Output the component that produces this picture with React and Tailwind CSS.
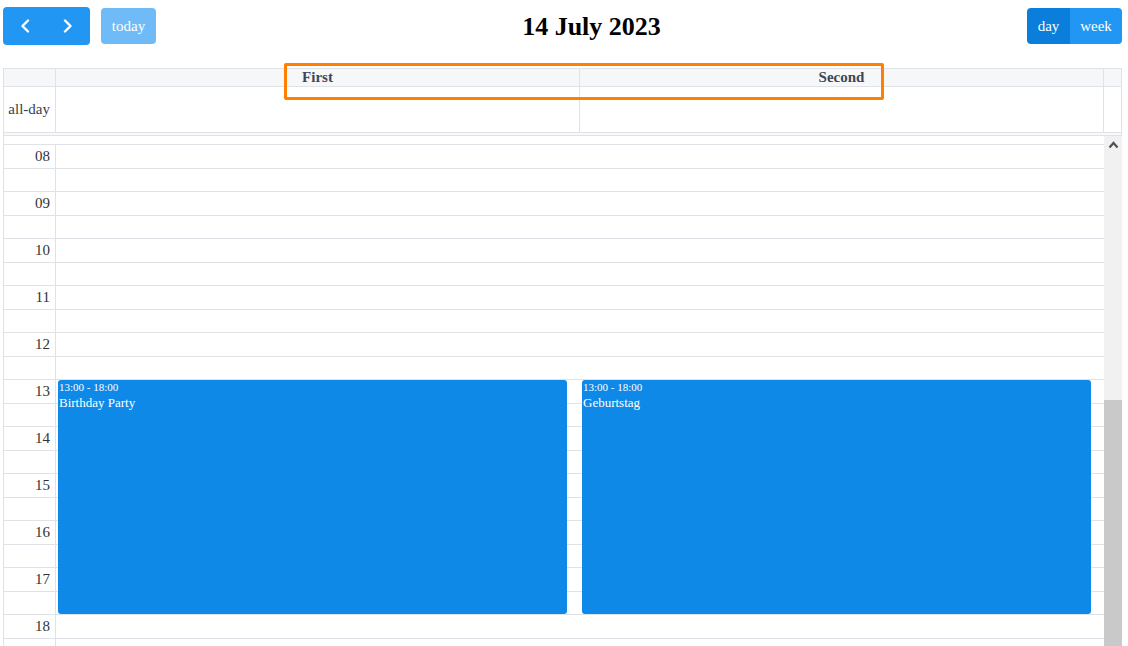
import React from "react"

const SLOTS = [
  "08", "", "09", "", "10", "", "11", "", "12", "", "13", "",
  "14", "", "15", "", "16", "", "17", "", "18", "",
]

const EVENTS = [
  { time: "13:00 - 18:00", title: "Birthday Party" },
  { time: "13:00 - 18:00", title: "Geburtstag" },
]

function Chevron({ dir }) {
  return (
    <svg width="10" height="14" viewBox="0 0 10 14" fill="none">
      <polyline
        points={dir === "left" ? "8,1.5 2.5,7 8,12.5" : "2,1.5 7.5,7 2,12.5"}
        stroke="white"
        strokeWidth="2.4"
        strokeLinecap="round"
        strokeLinejoin="round"
      />
    </svg>
  )
}

function Toolbar() {
  return (
    <div className="flex items-center justify-between h-[38px]">
      <div className="flex items-center">
        <div className="flex w-[87px] h-[38px] rounded-[4px] bg-[#2196f3]">
          <button className="flex-1 flex items-center justify-center pl-[1px]">
            <Chevron dir="left" />
          </button>
          <button className="flex-1 flex items-center justify-center pr-[1px]">
            <Chevron dir="right" />
          </button>
        </div>
        <button className="ml-[11px] w-[55px] h-[36px] rounded-[4px] bg-[#6fbbf7] text-white text-[15px]">
          today
        </button>
      </div>
      <h2 className="mt-[2px] text-[26px] font-bold text-black leading-none">14 July 2023</h2>
      <div className="flex h-[36px] rounded-[4px] overflow-hidden text-white text-[15px]">
        <button className="w-[43px] bg-[#0b7dda]">day</button>
        <button className="w-[52px] bg-[#2196f3]">week</button>
      </div>
    </div>
  )
}

function Scrollbar() {
  return (
    <div className="w-[18px] bg-[#f1f1f1] flex flex-col">
      <div className="h-[17px] flex items-center justify-center">
        <svg width="11" height="8" viewBox="0 0 11 8">
          <polyline
            points="1.5,6.5 5.5,2 9.5,6.5"
            fill="none"
            stroke="#505050"
            strokeWidth="2.2"
            strokeLinejoin="miter"
          />
        </svg>
      </div>
      <div className="h-[247px]" />
      <div className="flex-1 bg-[#c9c9c9]" />
    </div>
  )
}

export default function App() {
  return (
    <div className="relative w-[1128px] h-[646px] overflow-hidden bg-white pt-[7px] font-['Liberation_Serif',serif]">
      <div className="ml-[3px] w-[1119px]">
        <Toolbar />

        <div className="mt-[23px] border-l border-t border-[#dfe2e7]">
          {/* column headers */}
          <div className="flex h-[18px] border-b border-[#dfe2e7] bg-[#f6f7f9] text-[15px] font-bold text-[#3d4757] leading-[17px]">
            <div className="w-[52px] border-r border-[#dfe2e7]" />
            <div className="flex-1 border-r border-[#dfe2e7] text-center">First</div>
            <div className="flex-1 border-r border-[#dfe2e7] text-center">Second</div>
            <div className="w-[18px] border-r border-[#dfe2e7]" />
          </div>

          {/* all-day row */}
          <div className="flex h-[46px] border-b border-[#dfe2e7]">
            <div className="w-[52px] border-r border-[#dfe2e7] flex items-center justify-end pr-[5px] text-[15px] text-[#3a3f47]">
              all-day
            </div>
            <div className="flex-1 border-r border-[#dfe2e7]" />
            <div className="flex-1 border-r border-[#dfe2e7]" />
            <div className="w-[18px] border-r border-[#dfe2e7]" />
          </div>

          <div className="h-[3px] bg-[#f8f9fa] border-b border-r border-[#dfe2e7]" />

          {/* time grid */}
          <div className="flex h-[520px]">
            <div className="relative flex-1 overflow-hidden">
              <div className="h-[9px] border-b border-[#dfe2e7]" />
              {SLOTS.map((label, i) => (
                <div key={i} className="flex h-[23.5px] border-b border-[#dfe2e7]">
                  <div className="w-[52px] border-r border-[#dfe2e7] flex items-center justify-end pr-[5px] text-[15px] text-[#333]">
                    {label}
                  </div>
                  <div className="flex-1" />
                </div>
              ))}

              <div className="absolute top-0 bottom-0 left-[52px] right-0 flex">
                {EVENTS.map((ev) => (
                  <div key={ev.title} className="relative flex-1">
                    <div className="absolute top-[244px] h-[234px] left-[2px] right-[2.5%] rounded-[3px] bg-[#0e89e8] text-white px-[1px] pt-[1px]">
                      <div className="text-[11px] leading-[13px]">{ev.time}</div>
                      <div className="text-[13px] leading-[17px]">{ev.title}</div>
                    </div>
                  </div>
                ))}
              </div>
            </div>
            <Scrollbar />
          </div>
        </div>
      </div>

      {/* highlight box around the resource headers */}
      <div className="absolute left-[284px] top-[63px] w-[600px] h-[37px] border-[3px] border-[#ff8000] rounded-[2px]" />
    </div>
  )
}
